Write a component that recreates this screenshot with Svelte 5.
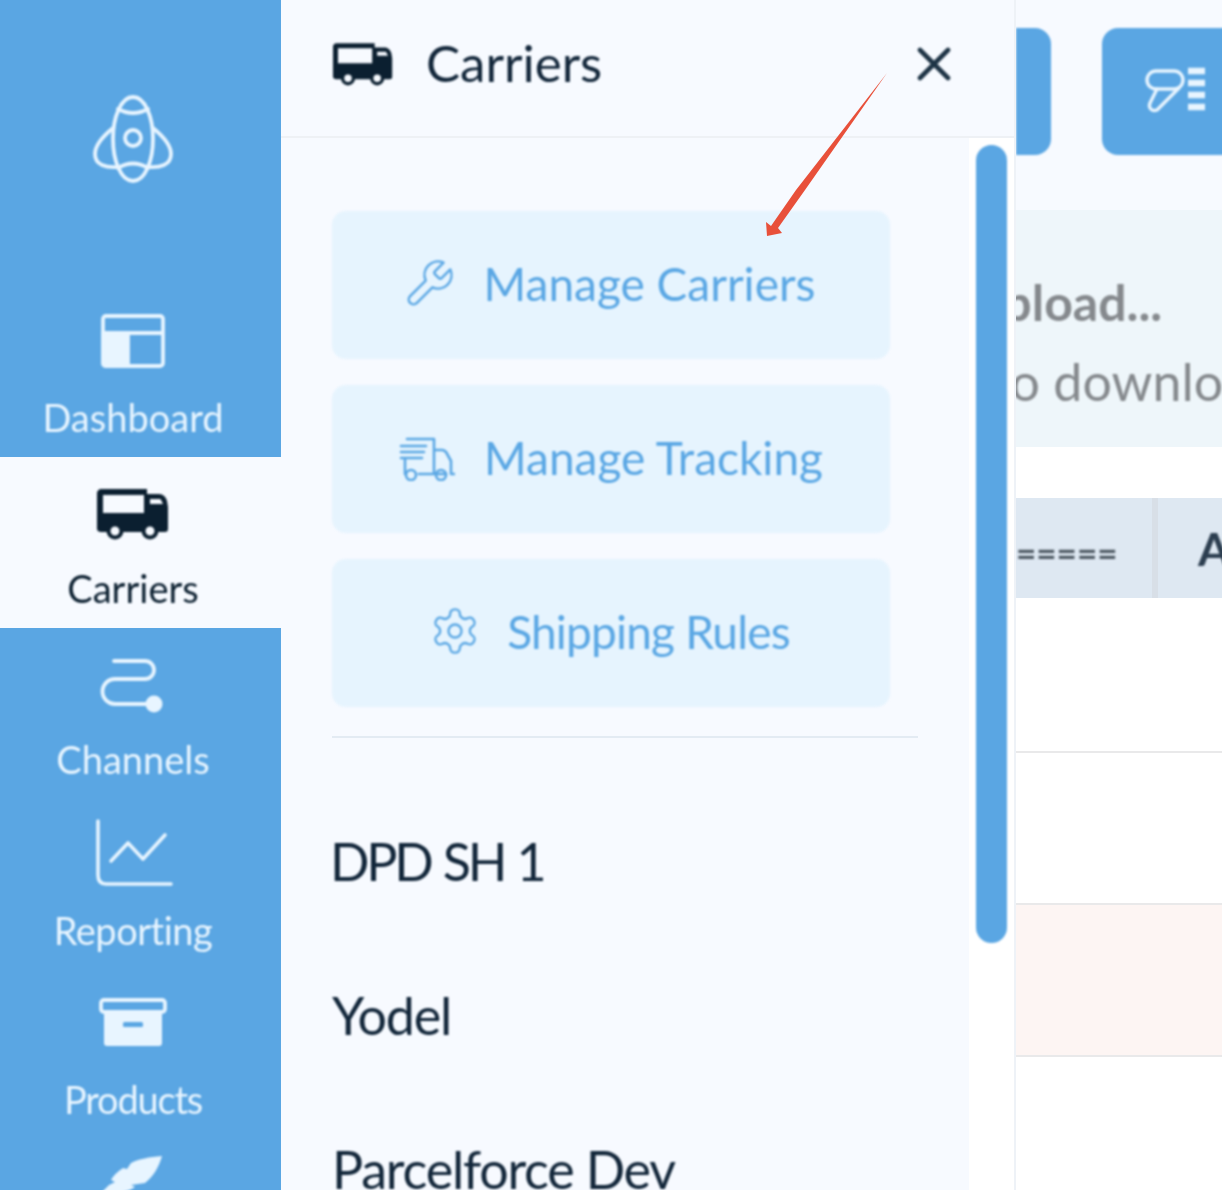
<script>
	const actions = [
		{ label: 'Manage Carriers', icon: 'wrench' },
		{ label: 'Manage Tracking', icon: 'tracking' },
		{ label: 'Shipping Rules', icon: 'gear' }
	];
	const carriers = ['DPD SH 1', 'Yodel', 'Parcelforce Dev'];
</script>

{#snippet truck(width, height)}
	<svg {width} {height} viewBox="0 0 72 52">
		<path
			fill="#0b1f30"
			fill-rule="evenodd"
			d="M4 0H50V5H62C66 5 69 8 70 12L71 18V40C71 42 70 43 68 43H4C2 43 0 42 0 40V4C0 2 2 0 4 0ZM6 6V24H47V6ZM53 10V15H66L64 11C64 10 63 10 62 10Z"
		/>
		<circle cx="18" cy="42" r="6.5" fill="#f7faff" stroke="#0b1f30" stroke-width="4" />
		<circle cx="53" cy="42" r="6.5" fill="#f7faff" stroke="#0b1f30" stroke-width="4" />
	</svg>
{/snippet}

<div class="shell">
	<aside class="sidebar">
		<div class="logo">
			<svg width="80" height="88" viewBox="0 0 80 88" fill="none" stroke="#e8f5ff" stroke-width="3.8" stroke-linecap="round">
				<path d="M40 2C28 2 20 22 20 44C20 66 28 86 40 86C52 86 60 66 60 44C60 22 52 2 40 2Z" />
				<path d="M25 14Q40 22 55 14M25 73Q40 64 55 73" />
				<circle cx="40" cy="43" r="8" />
				<path d="M20 33C9 42 2 50 2 59C2 70 13 73 25 72M60 33C71 42 78 50 78 59C78 70 67 73 55 72" />
			</svg>
		</div>

		<div class="nav-item">
			<div class="nav-icon">
				<svg class="ico-dash" width="64" height="54" viewBox="0 0 64 54" fill="none" stroke="#e8f5ff" stroke-width="3.8">
					<rect x="2" y="2" width="60" height="50" rx="3" />
					<path d="M2 19H62" />
					<path d="M2 19H27V52H5C3 52 2 51 2 49Z" fill="#e8f5ff" />
				</svg>
			</div>
			<div class="nav-label">Dashboard</div>
		</div>

		<div class="nav-item active">
			<div class="nav-icon ico-truck">{@render truck(72, 52)}</div>
			<div class="nav-label">Carriers</div>
		</div>

		<div class="nav-item">
			<div class="nav-icon">
				<svg class="ico-chan" width="66" height="54" viewBox="0 0 66 54" fill="none" stroke="#e8f5ff" stroke-width="3.8" stroke-linecap="round">
					<path d="M14 2H45A9 9 0 0 1 45 20H15A12.5 12.5 0 0 0 15 45H54" />
					<circle cx="54" cy="45" r="8.5" fill="#e8f5ff" stroke="none" />
				</svg>
			</div>
			<div class="nav-label">Channels</div>
		</div>

		<div class="nav-item">
			<div class="nav-icon">
				<svg class="ico-report" width="78" height="68" viewBox="0 0 78 68" fill="none" stroke="#e8f5ff" stroke-width="3.6" stroke-linecap="round" stroke-linejoin="round">
					<path d="M2 2V56C2 62 5 65 10 65H75" />
					<path d="M15 42L32 24L47 40L69 16" />
				</svg>
			</div>
			<div class="nav-label reporting">Reporting</div>
		</div>

		<div class="nav-item">
			<div class="nav-icon">
				<svg class="ico-box" width="68" height="50" viewBox="0 0 68 50" fill="none">
					<rect x="2" y="2" width="64" height="12" rx="3" stroke="#e8f5ff" stroke-width="3.8" />
					<path d="M5 15H63V45C63 47 62 48 60 48H8C6 48 5 47 5 45Z" fill="#e8f5ff" />
					<rect x="24" y="24" width="20" height="5" rx="1.5" fill="#5aa6e3" />
				</svg>
			</div>
			<div class="nav-label products">Products</div>
		</div>

		<div class="nav-item">
			<div class="nav-icon">
				<svg class="ico-feather" width="64" height="40" viewBox="0 0 64 40">
					<path fill="#e8f5ff" d="M61 1C48 2 38 4 30 8L26 14L22 13C16 17 12 21 10 25L14 27L8 30L0 38H12C20 38 28 36 34 32L30 30L44 28C52 22 58 12 61 1Z" />
				</svg>
			</div>
		</div>
	</aside>

	<section class="panel">
		<header class="panel-head">
			{@render truck(60, 44)}
			<h2>Carriers</h2>
			<svg class="close" width="34" height="34" viewBox="0 0 34 34" fill="none" stroke="#1d3345" stroke-width="4.6" stroke-linecap="round">
				<path d="M3 3L31 31M31 3L3 31" />
			</svg>
		</header>

		<div class="panel-body">
			<div class="panel-scroll">
				{#each actions as action}
					<button class="action">
						{#if action.icon === 'wrench'}
							<svg class="ico-wrench" width="54" height="54" viewBox="0 0 24 24" fill="none" stroke="#5aa7e4" stroke-width="1.1" stroke-linecap="round" stroke-linejoin="round">
								<path d="M14.7 6.3a1 1 0 0 0 0 1.4l1.6 1.6a1 1 0 0 0 1.4 0l3.77-3.77a6 6 0 0 1-7.94 7.94l-6.91 6.91a2.12 2.12 0 0 1-3-3l6.91-6.91a6 6 0 0 1 7.94-7.94l-3.76 3.76z" />
							</svg>
						{:else if action.icon === 'tracking'}
							<svg width="56" height="44" viewBox="0 0 56 44" fill="none" stroke="#5aa7e4" stroke-width="2.6" stroke-linecap="round" stroke-linejoin="round">
								<path d="M8 2H35V37H20M35 13H43C45 13 46 14 47 15L52 24V37H56M47 37H35" />
								<path d="M2 9H27M2 15H25M2 21H23M6 21V37" />
								<circle cx="12" cy="38" r="5" />
								<circle cx="42" cy="38" r="5" />
							</svg>
						{:else}
							<svg class="ico-gear" width="52" height="52" viewBox="0 0 24 24" fill="none" stroke="#5aa7e4" stroke-width="1.1" stroke-linecap="round" stroke-linejoin="round">
								<path d="M12.22 2h-.44a2 2 0 0 0-2 2v.18a2 2 0 0 1-1 1.73l-.43.25a2 2 0 0 1-2 0l-.15-.08a2 2 0 0 0-2.73.73l-.22.38a2 2 0 0 0 .73 2.73l.15.1a2 2 0 0 1 1 1.72v.51a2 2 0 0 1-1 1.74l-.15.09a2 2 0 0 0-.73 2.73l.22.38a2 2 0 0 0 2.73.73l.15-.08a2 2 0 0 1 2 0l.43.25a2 2 0 0 1 1 1.73V20a2 2 0 0 0 2 2h.44a2 2 0 0 0 2-2v-.18a2 2 0 0 1 1-1.73l.43-.25a2 2 0 0 1 2 0l.15.08a2 2 0 0 0 2.73-.73l.22-.39a2 2 0 0 0-.73-2.73l-.15-.08a2 2 0 0 1-1-1.74v-.5a2 2 0 0 1 1-1.74l.15-.09a2 2 0 0 0 .73-2.73l-.22-.38a2 2 0 0 0-2.73-.73l-.15.08a2 2 0 0 1-2 0l-.43-.25a2 2 0 0 1-1-1.73V4a2 2 0 0 0-2-2z" />
								<circle cx="12" cy="12" r="3" />
							</svg>
						{/if}
						<span>{action.label}</span>
					</button>
				{/each}
				<hr />
				{#each carriers as name}
					<div class="carrier">{name}</div>
				{/each}
			</div>
			<div class="track"><div class="thumb"></div></div>
		</div>
	</section>

	<main class="main">
		<div class="toolbar">
			<div class="tool tool-cut"></div>
			<div class="tool tool-scan">
				<svg width="62" height="48" viewBox="0 0 62 48" fill="none" stroke="#e8f5ff" stroke-width="3.4" stroke-linecap="round" stroke-linejoin="round">
					<rect x="2" y="6" width="36" height="18" rx="9" />
					<path d="M12 24L5 38C3 43 7 47 12 45L34 23" />
					<path d="M43 6H60M43 18H60M43 30H60M43 42H60" stroke-width="6.5" stroke-linecap="butt" />
				</svg>
			</div>
		</div>
		<div class="banner">
			<div class="banner-title">Upload...</div>
			<div class="banner-text">Click to download</div>
		</div>
		<div class="table-head">
			<span class="col-a"><span class="dashes">=====</span></span>
			<span class="col-b">A</span>
		</div>
		<div class="row"></div>
		<div class="row"></div>
		<div class="row row-warn"></div>
		<div class="row"></div>
	</main>
</div>

<svg class="arrow" width="140" height="180" viewBox="750 60 140 180">
	<path fill="#e8503a" d="M887 73L805 190L778 228L782 233L767 236L766 222L771 226L796 190Z" />
</svg>

<style>
	:global(body) {
		margin: 0;
		background: #f7faff;
		font-family: 'Lato', 'Open Sans', sans-serif;
	}

	.shell {
		display: flex;
		width: 1222px;
		height: 1190px;
		overflow: hidden;
	}

	/* the reference is an upscaled capture, everything but the arrow is soft */
	.logo svg,
	.nav-icon svg,
	.nav-label,
	.panel-head svg,
	.panel-head h2,
	.action,
	.carrier,
	.thumb,
	.tool,
	.banner-title,
	.banner-text,
	.dashes,
	.col-b {
		filter: blur(0.9px);
	}

	.sidebar {
		width: 281px;
		flex-shrink: 0;
		background: #5aa6e3;
		overflow: hidden;
	}

	.logo {
		height: 286px;
		padding: 95px 15px 0 0;
		box-sizing: border-box;
		display: flex;
		justify-content: center;
	}

	.nav-item {
		height: 171px;
		padding-right: 15px;
		box-sizing: border-box;
		color: #e8f5ff;
		text-align: center;
	}

	.nav-item.active {
		background: #f7faff;
		color: #0b1f30;
	}

	.nav-icon {
		height: 108px;
		display: flex;
		justify-content: center;
		align-items: flex-start;
	}

	.ico-dash { margin-top: 28px; }
	.ico-truck { padding-top: 32px; box-sizing: border-box; }
	.ico-chan { margin-top: 31px; }
	.ico-report { margin-top: 20px; margin-left: 3px; }
	.ico-box { margin-top: 28px; }
	.ico-feather { margin-top: 14px; }

	.nav-label {
		font-size: 38px;
		line-height: 46px;
	}

	.nav-label.reporting {
		letter-spacing: -0.5px;
	}

	.nav-label.products {
		letter-spacing: -1.2px;
		margin-top: -2px;
	}

	.panel {
		width: 735px;
		flex-shrink: 0;
		box-sizing: border-box;
		border-right: 2px solid #eef2f7;
		display: flex;
		flex-direction: column;
		background: #f7faff;
	}

	.panel-head {
		height: 138px;
		flex-shrink: 0;
		box-sizing: border-box;
		border-bottom: 2px solid #eef1f5;
		display: flex;
		align-items: center;
		padding: 0 63px 8px 52px;
	}

	.panel-head h2 {
		flex: 1;
		margin: 0 0 4px 33px;
		font-size: 51px;
		font-weight: 400;
		color: #12263a;
	}

	.panel-head svg:first-child {
		margin-top: 2px;
	}

	.panel-body {
		flex: 1;
		display: flex;
		min-height: 0;
	}

	.panel-scroll {
		flex: 1;
		min-width: 0;
		overflow: hidden;
		padding: 73px 50px 0 51px;
	}

	.action {
		display: flex;
		align-items: center;
		justify-content: center;
		gap: 29px;
		width: 558px;
		height: 148px;
		margin-bottom: 26px;
		padding: 0;
		border: none;
		border-radius: 14px;
		background: #e6f4fe;
		color: #5aa7e4;
		font-family: inherit;
		font-size: 46px;
		box-sizing: border-box;
	}

	.action span {
		margin-top: -4px;
	}

	.action:nth-child(3) span {
		letter-spacing: -0.8px;
	}

	.ico-wrench {
		margin: -2px -1px 0 -5px;
	}

	.ico-gear {
		margin: -5px -3px 0 -3px;
	}

	hr {
		width: 586px;
		margin: 29px 0 0;
		border: none;
		border-top: 2px solid #e3ebf3;
	}

	.carrier {
		height: 154px;
		line-height: 150px;
		font-size: 52px;
		letter-spacing: -1.2px;
		color: #12263a;
		white-space: nowrap;
	}

	.carrier:first-of-type {
		margin: 48px 0 0 -2px;
		letter-spacing: -3.2px;
		word-spacing: 2px;
	}

	.track {
		width: 45px;
		flex-shrink: 0;
		background: #fff;
		padding: 7px 7px 0;
		box-sizing: border-box;
	}

	.thumb {
		width: 31px;
		height: 798px;
		border-radius: 16px;
		background: #5aa6e3;
	}

	.main {
		flex: 1;
		min-width: 0;
		overflow: hidden;
		background: #fff;
	}

	.toolbar {
		height: 210px;
		box-sizing: border-box;
		padding-top: 28px;
		display: flex;
		gap: 51px;
		background: #f7faff;
	}

	.tool {
		height: 127px;
		background: #5aa6e3;
		flex-shrink: 0;
	}

	.tool-cut {
		width: 35px;
		border-radius: 0 16px 16px 0;
	}

	.tool-scan {
		width: 150px;
		border-radius: 16px;
		padding: 37px 0 0 43px;
		box-sizing: border-box;
	}

	.banner {
		height: 237px;
		box-sizing: border-box;
		padding-top: 60px;
		background: #eef6fa;
		color: #85898d;
		white-space: nowrap;
	}

	.banner-title {
		font-size: 50px;
		line-height: 64px;
		margin-left: -49px;
		font-weight: 700;
	}

	.banner-text {
		font-size: 52px;
		line-height: 94px;
		margin-left: -148px;
	}

	.table-head {
		height: 100px;
		margin-top: 51px;
		background: #dee8f2;
		display: flex;
		align-items: center;
		white-space: nowrap;
	}

	.col-a {
		width: 142px;
		height: 100%;
		flex-shrink: 0;
		box-sizing: border-box;
		border-right: 6px solid #d8dfe7;
		display: flex;
		align-items: center;
		padding-top: 8px;
	}

	.dashes {
		font-size: 35px;
		font-weight: 700;
		color: #4f5a64;
	}

	.col-b {
		margin-left: 40px;
		font-size: 46px;
		font-weight: 700;
		color: #2c3e50;
	}

	.row {
		height: 152px;
		box-sizing: border-box;
		border-bottom: 2px solid #e9e9ea;
	}

	.row:nth-of-type(4) {
		height: 155px;
	}

	.row-warn {
		background: #fdf5f3;
	}

	.arrow {
		position: absolute;
		left: 750px;
		top: 60px;
	}
</style>
